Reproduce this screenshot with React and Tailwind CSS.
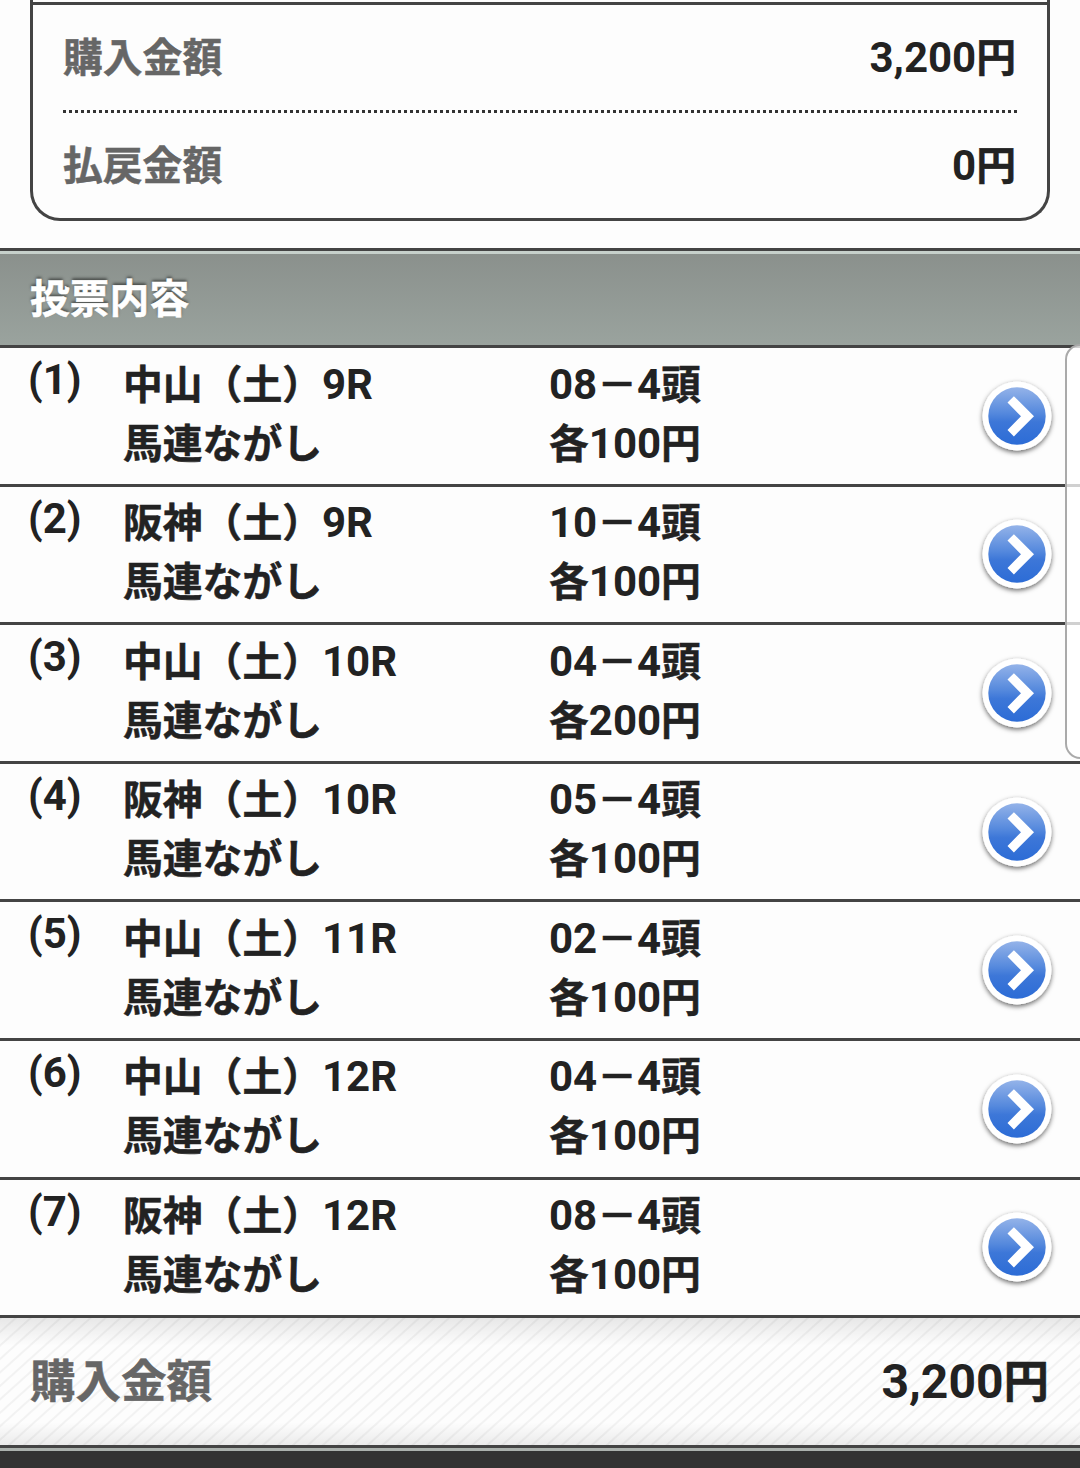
import React from 'react';

const bets = [
  { race: '中山（土）9R', pick: '08－4頭', stake: '各100円' },
  { race: '阪神（土）9R', pick: '10－4頭', stake: '各100円' },
  { race: '中山（土）10R', pick: '04－4頭', stake: '各200円' },
  { race: '阪神（土）10R', pick: '05－4頭', stake: '各100円' },
  { race: '中山（土）11R', pick: '02－4頭', stake: '各100円' },
  { race: '中山（土）12R', pick: '04－4頭', stake: '各100円' },
  { race: '阪神（土）12R', pick: '08－4頭', stake: '各100円' },
];

// Japanese glyphs are set slightly smaller than the latin ones next to them
const Mixed = ({ text }) =>
  text.split(/([\x20-\x7e]+)/).filter(Boolean).map((part, i) =>
    /^[\x20-\x7e]/.test(part) ? (
      <span key={i}>{part}</span>
    ) : (
      <span key={i} className="text-[0.948em] font-['Noto_Sans_CJK_JP',sans-serif] [-webkit-text-stroke:0.5px_currentColor]">{part}</span>
    )
  );

const AmountRow = ({ label, value }) => (
  <div className="flex h-[105px] items-center justify-between pb-[3px] leading-[60px]">
    <span className="text-[#666]"><Mixed text={label} /></span>
    <span className="pr-px"><Mixed text={value} /></span>
  </div>
);

const ArrowButton = () => (
  <svg viewBox="0 0 82 90" className="h-[90px] w-[82px]">
    <defs>
      <linearGradient id="ball" x1="0" y1="0" x2="0" y2="1">
        <stop offset="0" stopColor="#94b3e9" />
        <stop offset="0.45" stopColor="#5589dd" />
        <stop offset="0.6" stopColor="#3d77d8" />
        <stop offset="1" stopColor="#2c6cd6" />
      </linearGradient>
      <filter id="drop" x="-20%" y="-20%" width="140%" height="140%">
        <feDropShadow dx="0" dy="2" stdDeviation="2.5" floodColor="#000" floodOpacity="0.6" />
      </filter>
    </defs>
    <circle cx="41" cy="45" r="34.5" fill="#fff" filter="url(#drop)" />
    <circle cx="41" cy="45" r="28.7" fill="url(#ball)" />
    <path d="M31.5 31.5 L37.9 25.2 L58 45.3 L37.9 65.4 L31.5 59 L45 45.3 Z" fill="#fff" />
  </svg>
);

const BetRow = ({ index, bet }) => (
  <div className="flex h-[138.6px] items-start border-b-3 border-[#444] pl-[27px] leading-[59px]">
    <div className="h-[59px] w-[96px] pt-[2px] pl-px"><Mixed text={`(${index})`} /></div>
    <div className="w-[426px] pt-[3.5px]">
      <p className="h-[59px]"><Mixed text={bet.race} /></p>
      <p className="h-[59px]"><Mixed text="馬連ながし" /></p>
    </div>
    <div className="flex-1 pt-[3.5px]">
      <p className="h-[59px]"><Mixed text={bet.pick} /></p>
      <p className="h-[59px]"><Mixed text={bet.stake} /></p>
    </div>
    <div className="mr-[22px] self-center"><ArrowButton /></div>
  </div>
);

const App = () => (
  <div className="relative h-[1468px] w-[1080px] overflow-hidden bg-[#fdfdfd] font-[Roboto,sans-serif] text-[42px] font-bold text-[#222]">
    {/* Summary box */}
    <div className="mx-[30px] h-[221px] rounded-b-[30px] border-3 border-t-0 border-[#444]">
      <div className="h-[5px] border-b-3 border-[#444]" />
      <div className="px-[30px]">
        <AmountRow label="購入金額" value="3,200円" />
        <div className="h-[3px] bg-[repeating-linear-gradient(90deg,#333_0_3px,transparent_3px_5.981px)]" />
        <AmountRow label="払戻金額" value="0円" />
      </div>
    </div>

    <div className="mt-[27px] h-[100px] border-y-3 border-[#444] bg-linear-to-b from-[#8a908c] to-[#9aa39e]">
      <div className="h-[94px] border-t-3 border-[#c6d0cb] pl-[30px] leading-[84px] text-white [text-shadow:0_-2px_3px_rgba(0,0,0,0.5)]">
        <Mixed text="投票内容" />
      </div>
    </div>

    <div>
      {bets.map((bet, i) => (
        <BetRow key={i} index={i + 1} bet={bet} />
      ))}
    </div>

    {/* Total */}
    <div className="h-[127px] bg-[linear-gradient(#00000016,transparent_22%,transparent_82%,#00000012),repeating-linear-gradient(138deg,#f2f2f2_0_1px,#fdfdfd_2px_9px,#f2f2f2_10px)]">
      <div className="flex h-full items-center justify-between pr-[31px] pl-[30px] pb-px text-[48px]">
        <span className="text-[#666]"><Mixed text="購入金額" /></span>
        <span><Mixed text="3,200円" /></span>
      </div>
    </div>
    <div className="h-6 border-t-3 border-[#444] bg-[#333]">
      <div className="h-[3px] bg-[#acb2ae]" />
    </div>

    {/* Scroll thumb over the list */}
    <div className="absolute top-[344px] -right-[16px] h-[415px] w-[31px] rounded-[16px] border-2 border-[#aaa] bg-white/75" />
  </div>
);

export default App;
